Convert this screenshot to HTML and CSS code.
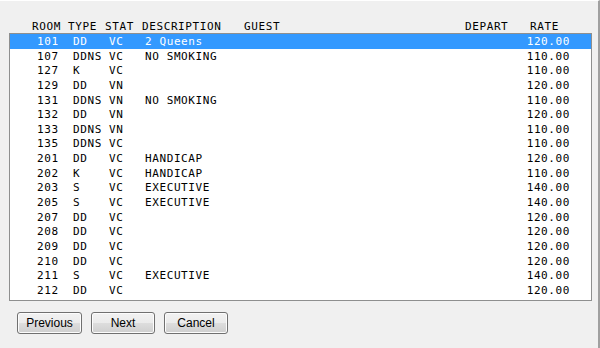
FILE: index.html
```html
<!DOCTYPE html>
<html lang="en">
<head>
  <meta charset="UTF-8" />
  <title>Room Select</title>
  <link rel="stylesheet" href="styles.css">
</head>
<body>

  <div class="dialog">

    <div class="list-head">
      <span class="h-room">ROOM</span>
      <span class="h-type">TYPE</span>
      <span class="h-stat">STAT</span>
      <span class="h-desc">DESCRIPTION</span>
      <span class="h-guest">GUEST</span>
      <span class="h-depart">DEPART</span>
      <span class="h-rate">RATE</span>
    </div>

    <div class="room-list">
      <div class="row selected"><span>101</span><span>DD</span><span>VC</span><span>2 Queens</span><span class="rate">120.00</span></div>
      <div class="row"><span>107</span><span>DDNS</span><span>VC</span><span>NO SMOKING</span><span class="rate">110.00</span></div>
      <div class="row"><span>127</span><span>K</span><span>VC</span><span></span><span class="rate">110.00</span></div>
      <div class="row"><span>129</span><span>DD</span><span>VN</span><span></span><span class="rate">120.00</span></div>
      <div class="row"><span>131</span><span>DDNS</span><span>VN</span><span>NO SMOKING</span><span class="rate">110.00</span></div>
      <div class="row"><span>132</span><span>DD</span><span>VN</span><span></span><span class="rate">120.00</span></div>
      <div class="row"><span>133</span><span>DDNS</span><span>VN</span><span></span><span class="rate">110.00</span></div>
      <div class="row"><span>135</span><span>DDNS</span><span>VC</span><span></span><span class="rate">110.00</span></div>
      <div class="row"><span>201</span><span>DD</span><span>VC</span><span>HANDICAP</span><span class="rate">120.00</span></div>
      <div class="row"><span>202</span><span>K</span><span>VC</span><span>HANDICAP</span><span class="rate">110.00</span></div>
      <div class="row"><span>203</span><span>S</span><span>VC</span><span>EXECUTIVE</span><span class="rate">140.00</span></div>
      <div class="row"><span>205</span><span>S</span><span>VC</span><span>EXECUTIVE</span><span class="rate">140.00</span></div>
      <div class="row"><span>207</span><span>DD</span><span>VC</span><span></span><span class="rate">120.00</span></div>
      <div class="row"><span>208</span><span>DD</span><span>VC</span><span></span><span class="rate">120.00</span></div>
      <div class="row"><span>209</span><span>DD</span><span>VC</span><span></span><span class="rate">120.00</span></div>
      <div class="row"><span>210</span><span>DD</span><span>VC</span><span></span><span class="rate">120.00</span></div>
      <div class="row"><span>211</span><span>S</span><span>VC</span><span>EXECUTIVE</span><span class="rate">140.00</span></div>
      <div class="row"><span>212</span><span>DD</span><span>VC</span><span></span><span class="rate">120.00</span></div>
    </div>

    <div class="buttons">
      <button class="btn-prev">Previous</button>
      <button>Next</button>
      <button>Cancel</button>
    </div>

  </div>

</body>
</html>
```

FILE: styles.css
```css
body {
  margin: 0;
  background: #f0f0f0;
}

.dialog {
  box-sizing: border-box;
  width: 600px;
  height: 348px;
  padding-top: 18px;
  border-top: 1px solid #ffffff;
  border-right: 2px solid #a0a0a0;
  background: #f0f0f0;
}

.list-head,
.row {
  font-family: "DejaVu Sans Mono", monospace;
  font-size: 11px;
  letter-spacing: 0.6px;
  color: #000;
}

.list-head {
  display: flex;
  height: 14px;
  line-height: 16.4px;
  padding-left: 32px;
  white-space: pre;
}

.h-room { width: 36px; }
.h-type { width: 37px; }
.h-stat { width: 37px; }
.h-desc { width: 102px; }
.h-guest { width: 221px; }
.h-depart { width: 65px; }

.room-list {
  box-sizing: border-box;
  width: 583px;
  height: 268px;
  margin: 0 0 0 9px;
  border: 1px solid #8e8f8f;
  background: #fff;
  overflow: hidden;
}

.row {
  display: grid;
  grid-template-columns: 36px 36px 36px 1fr auto;
  height: 14.65px;
  line-height: 16.4px;
  padding: 0 21px 0 27px;
  white-space: pre;
}

.row.selected {
  background: #3399ff;
  color: #fff;
}

.buttons {
  display: flex;
  gap: 9px;
  margin-top: 11px;
  padding-left: 17px;
}

.buttons button {
  box-sizing: border-box;
  width: 64px;
  height: 22px;
  padding: 0;
  font-family: "Liberation Sans", Arial, sans-serif;
  font-size: 12px;
  color: #000;
  border: 1px solid #707070;
  border-radius: 3px;
  background: linear-gradient(#f2f2f2 0%, #ebebeb 50%, #dddddd 51%, #cfcfcf 100%);
  box-shadow: inset 0 0 0 1px #fcfcfc;
}

.buttons .btn-prev {
  width: 65px;
}
```
